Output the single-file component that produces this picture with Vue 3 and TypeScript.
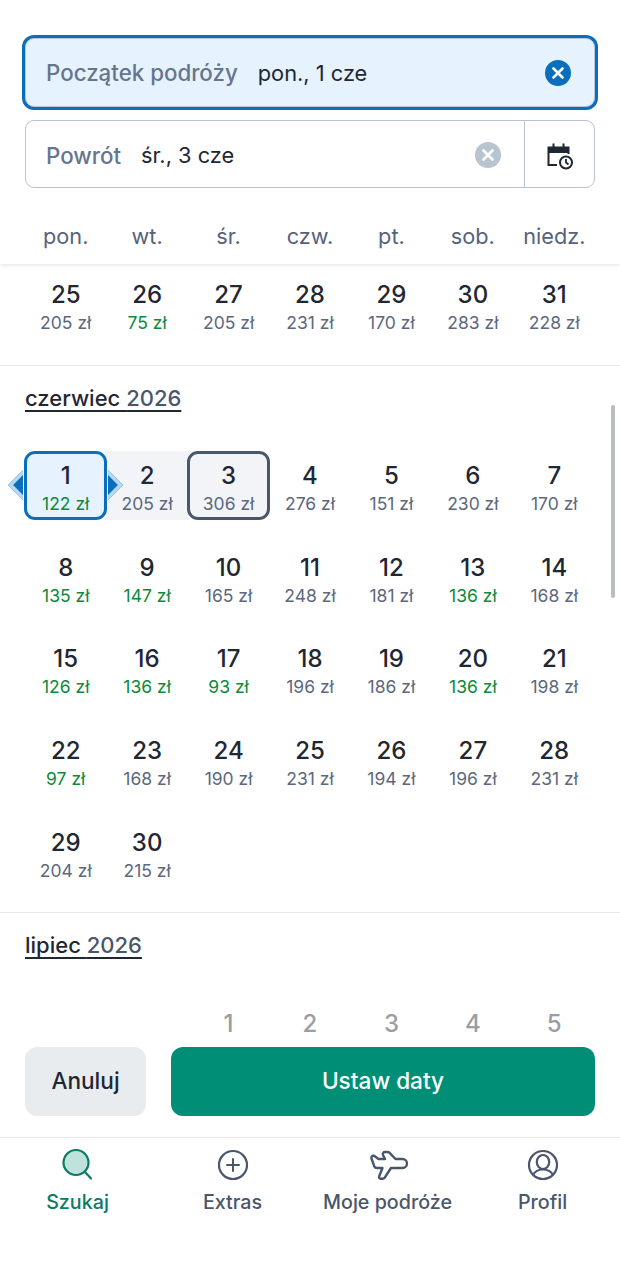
<template>
  <div class="screen">
    <header class="top">
      <div class="field active">
        <span class="label">Początek podróży</span>
        <span class="value">pon., 1 cze</span>
        <svg class="clear" width="26" height="26" viewBox="0 0 26 26">
          <circle cx="13" cy="13" r="13" fill="#0a6ebf" />
          <path d="M8.500 8.500l9 9M17.500 8.500l-9 9" stroke="#fff" stroke-width="2.600" stroke-linecap="round" />
        </svg>
      </div>
      <div class="field back">
        <span class="label">Powrót</span>
        <span class="value">śr., 3 cze</span>
        <svg class="clear" width="26" height="26" viewBox="0 0 26 26">
          <circle cx="13" cy="13" r="13" fill="#b8c4d0" />
          <path d="M8.500 8.500l9 9M17.500 8.500l-9 9" stroke="#fff" stroke-width="2.600" stroke-linecap="round" />
        </svg>
        <div class="cal-btn">
          <svg width="28" height="28" viewBox="0 0 28 28" fill="none" stroke="#1f2733" stroke-width="2">
            <path d="M11 23H2.500V5.500h20V12" />
            <path d="M2.500 8.500h20" stroke-width="5" />
            <path d="M7.500 1.500v4M17.500 1.500v4" />
            <circle cx="20" cy="20.500" r="6" />
            <path d="M20 17V20.500l2.500 2" stroke-width="1.800" />
          </svg>
        </div>
      </div>
      <div class="weekdays">
        <span v-for="d in weekdays" :key="d">{{ d }}</span>
      </div>
    </header>

    <main class="scroll">
      <section class="month first">
        <div class="grid">
          <div v-for="c in may" :key="c.day" class="cell">
            <span class="num">{{ c.day }}</span>
            <span class="price" :class="{ cheap: c.cheap }">{{ c.price }} zł</span>
          </div>
        </div>
      </section>

      <section class="month">
        <h2 class="title">czerwiec <span class="year">2026</span></h2>
        <div class="grid">
          <div
            v-for="c in june"
            :key="c.day"
            class="cell"
            :class="{ start: c.day === 1, mid: c.day === 2, end: c.day === 3 }"
          >
            <span class="num">{{ c.day }}</span>
            <span class="price" :class="{ cheap: c.cheap }">{{ c.price }} zł</span>
          </div>
        </div>
      </section>

      <section class="month july">
        <h2 class="title">lipiec <span class="year">2026</span></h2>
        <div class="grid">
          <div class="cell" />
          <div class="cell" />
          <div v-for="n in 5" :key="n" class="cell">
            <span class="num faded">{{ n }}</span>
          </div>
        </div>
      </section>
    </main>
    <div class="scrollbar" />

    <div class="actions">
      <button class="btn cancel" type="button">Anuluj</button>
      <button class="btn confirm" type="button">Ustaw daty</button>
    </div>

    <nav class="nav">
      <div class="tab current">
        <svg width="34" height="34" viewBox="0 0 34 34" fill="none" stroke="#0d7a63" stroke-width="2.200">
          <circle cx="15" cy="14.500" r="12.500" fill="#bfe3dc" />
          <path d="M24 24l6 6.500" stroke-linecap="round" />
        </svg>
        <span>Szukaj</span>
      </div>
      <div class="tab">
        <svg width="34" height="34" viewBox="0 0 34 34" fill="none" stroke="#4a566b" stroke-width="2.200">
          <circle cx="17" cy="17" r="14" />
          <path d="M17 11v12M11 17h12" stroke-width="2" stroke-linecap="round" />
        </svg>
        <span>Extras</span>
      </div>
      <div class="tab">
        <svg width="40" height="34" viewBox="0 0 40 34" fill="none" stroke="#4a566b" stroke-width="2.400" stroke-linejoin="round">
          <path d="M3.500 10.500c-.4-2 .8-3.200 2.500-2.800l4.500 3.300H17l-2-4c-.6-1.500 .5-3 2-3h2.500c1.200 0 2 .5 2.600 1.300L27.500 11h7a4.500 4.500 0 0 1 0 9H23l-6.200 9.500c-.6 .8-1.300 1.200-2.300 1.200h-1.500c-1.500 0-2.300-1-1.800-2.500L14.500 20H9c-1.500 0-2.300-.6-2.800-1.800z" />
        </svg>
        <span>Moje podróże</span>
      </div>
      <div class="tab">
        <svg width="34" height="34" viewBox="0 0 34 34" fill="none" stroke="#4a566b" stroke-width="2.200">
          <circle cx="17" cy="17" r="14" />
          <ellipse cx="17" cy="14" rx="6.200" ry="7" />
          <path d="M7 27c2-4 6-5.500 10-5.500s8 1.500 10 5.500" />
        </svg>
        <span>Profil</span>
      </div>
    </nav>
  </div>
</template>

<script setup lang="ts">
interface Day {
  day: number
  price: number
  cheap?: boolean
}

const weekdays = ['pon.', 'wt.', 'śr.', 'czw.', 'pt.', 'sob.', 'niedz.']

const may: Day[] = [
  { day: 25, price: 205 },
  { day: 26, price: 75, cheap: true },
  { day: 27, price: 205 },
  { day: 28, price: 231 },
  { day: 29, price: 170 },
  { day: 30, price: 283 },
  { day: 31, price: 228 }
]

const junePrices = [
  122, 205, 306, 276, 151, 230, 170, 135, 147, 165, 248, 181, 136, 168, 126, 136, 93, 196, 186, 136,
  198, 97, 168, 190, 231, 194, 196, 231, 204, 215
]
const cheapDays = [1, 8, 9, 13, 15, 16, 17, 20, 22]

const june: Day[] = junePrices.map((price, i) => ({
  day: i + 1,
  price,
  cheap: cheapDays.includes(i + 1)
}))
</script>

<style>
body {
  background: #fff;
}
</style>

<style scoped>
.screen {
  position: relative;
  width: 620px;
  height: 1269px;
  display: flex;
  flex-direction: column;
  overflow: hidden;
  background: #fff;
  color: #1f2733;
  font-family: Inter, "Liberation Sans", sans-serif;
}
.top {
  position: relative;
  z-index: 2;
  height: 264px;
  box-sizing: border-box;
  padding: 38px 25px 0;
  background: #fff;
  box-shadow: 0 1px 4px rgba(40, 50, 70, 0.14);
}
.field {
  display: flex;
  align-items: center;
  box-sizing: border-box;
  height: 68px;
  padding-left: 20px;
  border: 1px solid #b8c4d6;
  border-radius: 9px;
  font-size: 22.3px;
}
.field.active {
  height: 69px;
  margin-bottom: 13px;
  padding-right: 23px;
  background: #e6f2fd;
  box-shadow: 0 0 0 3px #0a6ebf;
}
.field.back > span,
.field.back > .clear {
  position: relative;
  top: 1px;
}
.label {
  font-weight: 500;
  color: #66758c;
  margin-right: 20px;
}
.value {
  flex: 1;
  font-size: 21.8px;
  color: #1f2733;
}
.clear {
  flex: none;
}
.cal-btn {
  flex: none;
  display: flex;
  align-items: center;
  justify-content: center;
  width: 70px;
  height: 100%;
  margin-left: 23px;
  padding-top: 3px;
  box-sizing: border-box;
  border-left: 1px solid #b8c4d6;
}
.weekdays {
  display: grid;
  grid-template-columns: repeat(7, 1fr);
  margin-top: 33px;
  text-align: center;
  font-size: 21.7px;
  line-height: 30px;
  color: #56627a;
}
.scroll {
  flex: 1;
  min-height: 0;
  overflow: hidden;
  padding-top: 6px;
}
.month {
  padding: 17px 25px 25px;
  border-bottom: 1px solid #e6e9ee;
}
.month.first {
  padding-top: 0;
  padding-bottom: 26px;
}
.title {
  margin: 0 0 38px;
  font-size: 22px;
  line-height: 30px;
  font-weight: 500;
  color: #1f2733;
  text-decoration: underline;
  text-underline-offset: 4px;
  text-decoration-thickness: 2px;
  text-decoration-skip-ink: none;
}
.july .title {
  margin-bottom: 39px;
}
.year {
  color: #4a566b;
}
.grid {
  display: grid;
  grid-template-columns: repeat(7, 1fr);
  row-gap: 22.7px;
}
.cell {
  position: relative;
  display: flex;
  flex-direction: column;
  align-items: center;
  height: 69px;
  box-sizing: border-box;
  padding-top: 10px;
}
.num {
  font-size: 24px;
  line-height: 30px;
  font-weight: 550;
  color: #1f2733;
}
.num.faded {
  font-weight: 500;
  color: #9a9ea3;
}
.price {
  margin-top: 2px;
  font-size: 17.500px;
  line-height: 22px;
  color: #5c687e;
}
.price.cheap {
  color: #0d8a3a;
}
.start,
.end {
  padding-top: 7px;
  border: 3px solid #0a6ebf;
  border-radius: 11px;
  margin: 0 -1px;
  z-index: 1;
}
.start {
  background: #e6f2fd;
}
.end {
  border-color: #4a566b;
  background: #f2f4f8;
}
.mid {
  background: #f2f4f8;
  margin: 0 -1px;
}
.start::before,
.start::after {
  content: "";
  position: absolute;
  top: 20px;
  width: 22px;
  height: 22px;
  transform: rotate(45deg);
  background: #0a6ebf;
  border: 4px solid #b8d8f2;
  box-sizing: border-box;
  z-index: -1;
}
.start::before {
  left: -15px;
  clip-path: polygon(0 0, 100% 100%, 0 100%);
}
.start::after {
  right: -15px;
  clip-path: polygon(0 0, 100% 0, 100% 100%);
}
.scrollbar {
  position: absolute;
  top: 405px;
  right: 5px;
  width: 4px;
  height: 193px;
  border-radius: 2px;
  background: #b9bcc0;
}
.actions {
  position: relative;
  z-index: 2;
  display: flex;
  gap: 25px;
  padding: 7px 25px 21px;
  background: #fff;
}
.btn {
  height: 69px;
  padding: 0 0 2px;
  border: 0;
  border-radius: 12px;
  font-family: inherit;
  font-size: 22.600px;
  font-weight: 500;
}
.cancel {
  width: 121px;
  flex: none;
  background: #e9ecef;
  color: #1f2733;
}
.confirm {
  flex: 1;
  background: #008f76;
  color: #fff;
}
.nav {
  position: relative;
  z-index: 2;
  display: grid;
  grid-template-columns: repeat(4, 1fr);
  height: 132px;
  box-sizing: border-box;
  padding-top: 10px;
  border-top: 1px solid #e6e9ee;
  background: #fff;
}
.tab {
  display: flex;
  flex-direction: column;
  align-items: center;
  gap: 7px;
  font-size: 19.700px;
  line-height: 26px;
  font-weight: 500;
  color: #4a566b;
}
.tab.current {
  color: #0d7a63;
}
</style>
